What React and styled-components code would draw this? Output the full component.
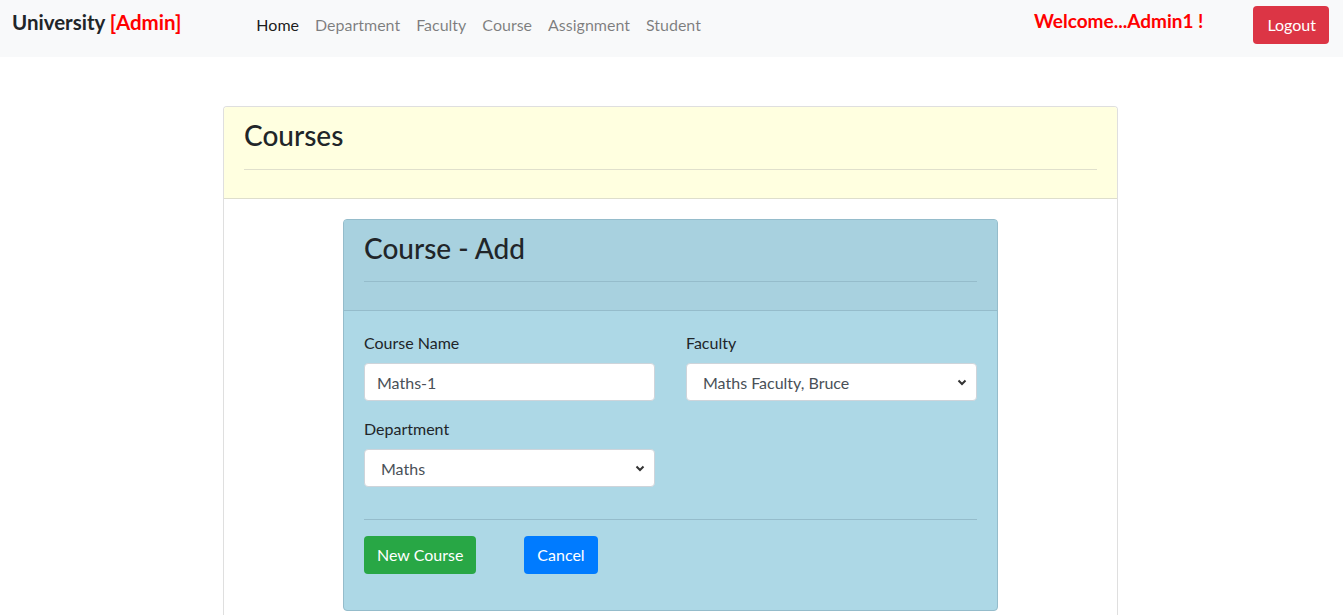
import React, { useState } from 'react';
import styled, { createGlobalStyle } from 'styled-components';

const GlobalStyle = createGlobalStyle`
    * { box-sizing: border-box; }
    body {
        margin: 0;
        font-family: Lato, "Noto Sans", "Liberation Sans", sans-serif;
        font-size: 16px;
        line-height: 1.5;
        color: #212529;
        background: #fff;
    }
`;

const StyledNavbar = styled.nav`
    display: flex;
    align-items: center;
    height: 57px;
    padding: 0 14px 0 12px;
    background-color: #f8f9fa;
`;

const StyledBrand = styled.div`
    font-size: 20.5px;
    font-weight: 700;
    line-height: 1;
    margin-top: -12px;
    white-space: nowrap;
    span { color: #ff0000; }
`;

const StyledNav = styled.ul`
    display: flex;
    list-style: none;
    margin: -8px 0 0 67px;
    padding: 0;
`;

const StyledNavLink = styled.li`
    padding: 8px 8px;
    font-size: 16px;
    color: ${({ active }) => active ? 'rgba(0,0,0,.9)' : 'rgba(0,0,0,.5)'};
    cursor: pointer;
`;

const StyledWelcome = styled.div`
    margin-left: auto;
    margin-right: 50px;
    margin-top: -14px;
    color: #ff0000;
    font-size: 19px;
    font-weight: 700;
`;

const Button = styled.button`
    font-family: inherit;
    font-size: 16px;
    line-height: 1.5;
    padding: 6px 12px;
    height: 38px;
    border: 1px solid transparent;
    border-radius: 4px;
    color: #fff;
    cursor: pointer;
    background-color: ${({ variant }) => ({ danger: '#dc3545', success: '#28a745', primary: '#007bff' })[variant]};
    margin-left: ${({ gap }) => gap || 0}px;
`;

const LogoutButton = styled(Button)`
    margin-top: -7px;
    padding: 6px 12px 6px 13px;
`;

const StyledPage = styled.main`
    display: flex;
    justify-content: center;
    padding: 49px 2px 0 0;
`;

const Card = styled.section`
    width: ${({ width }) => width}px;
    border: 1px solid ${({ inner }) => inner ? '#95bccb' : 'rgba(0,0,0,.125)'};
    border-radius: 4px;
    background-color: ${({ bg }) => bg};
    overflow: hidden;
    margin: ${({ inner }) => inner ? '0 auto' : '0'};
`;

const CardHeader = styled.header`
    padding: 12px 20px;
    background-color: ${({ bg }) => bg};
    border-bottom: 1px solid ${({ line }) => line};

    h3 {
        margin: 0 0 8px;
        font-size: 28px;
        font-weight: 500;
        line-height: 1.2;
    }
`;

const Rule = styled.hr`
    margin: 16px 0;
    border: 0;
    border-top: 1px solid ${({ color }) => color || 'rgba(0,0,0,.1)'};
`;

const CardBody = styled.div`
    padding: 20px;
`;

const FormGrid = styled.div`
    display: grid;
    grid-template-columns: 291px 291px;
    column-gap: 31px;
`;

const FormGroup = styled.div`
    margin-bottom: 16px;

    label {
        display: block;
        margin-bottom: 8px;
        font-size: 16px;
    }
`;

const Input = styled.input`
    display: block;
    width: 100%;
    height: 38px;
    padding: 6px 12px;
    font-family: inherit;
    font-size: 16px;
    color: #495057;
    background: #fff;
    border: 1px solid #ced4da;
    border-radius: 4px;
`;

const SelectWrap = styled.div`
    position: relative;

    svg {
        position: absolute;
        right: 10px;
        top: 16px;
        pointer-events: none;
    }
`;

const Select = styled.select`
    display: block;
    width: 100%;
    height: 38px;
    padding: 6px 12px 6px 16px;
    font-family: inherit;
    font-size: 16px;
    color: #495057;
    background: #fff;
    border: 1px solid #ced4da;
    border-radius: 4px;
    appearance: none;
`;

const Chevron = () => (
    <svg width="10" height="7" viewBox="0 0 10 7">
        <path d="M1.5 1.5 L5 5 L8.5 1.5" fill="none" stroke="#333" strokeWidth="2" />
    </svg>
);

const navItems = ['Home', 'Department', 'Faculty', 'Course', 'Assignment', 'Student'];

const App = () => {
    const [name, setName] = useState('Maths-1');
    const [faculty, setFaculty] = useState('bruce');
    const [department, setDepartment] = useState('maths');

    return (
        <>
            <GlobalStyle />
            <StyledNavbar>
                <StyledBrand>University <span>[Admin]</span></StyledBrand>
                <StyledNav>
                    {navItems.map((item, i) => (
                        <StyledNavLink key={item} active={i === 0}>{item}</StyledNavLink>
                    ))}
                </StyledNav>
                <StyledWelcome>Welcome...Admin1 !</StyledWelcome>
                <LogoutButton variant="danger">Logout</LogoutButton>
            </StyledNavbar>

            <StyledPage>
                <Card width={895} bg="#fff">
                    <CardHeader bg="#ffffe0" line="#dedecc">
                        <h3>Courses</h3>
                        <Rule color="#e0e0cc" />
                    </CardHeader>
                    <CardBody>
                        <Card width={655} inner bg="#add8e6">
                            <CardHeader bg="#a8d1df" line="#95bccb">
                                <h3>Course - Add</h3>
                                <Rule color="#95bccb" />
                            </CardHeader>
                            <CardBody>
                                <FormGrid>
                                    <FormGroup>
                                        <label>Course Name</label>
                                        <Input value={name} onChange={e => setName(e.target.value)} />
                                    </FormGroup>
                                    <FormGroup>
                                        <label>Faculty</label>
                                        <SelectWrap>
                                            <Select value={faculty} onChange={e => setFaculty(e.target.value)}>
                                                <option value="bruce">Maths Faculty, Bruce</option>
                                            </Select>
                                            <Chevron />
                                        </SelectWrap>
                                    </FormGroup>
                                    <FormGroup>
                                        <label>Department</label>
                                        <SelectWrap>
                                            <Select value={department} onChange={e => setDepartment(e.target.value)}>
                                                <option value="maths">Maths</option>
                                            </Select>
                                            <Chevron />
                                        </SelectWrap>
                                    </FormGroup>
                                </FormGrid>
                                <Rule color="#95bccb" />
                                <FormGroup>
                                    <Button variant="success">New Course</Button>
                                    <Button variant="primary" gap={48}>Cancel</Button>
                                </FormGroup>
                            </CardBody>
                        </Card>
                    </CardBody>
                </Card>
            </StyledPage>
        </>
    );
};

export default App;
